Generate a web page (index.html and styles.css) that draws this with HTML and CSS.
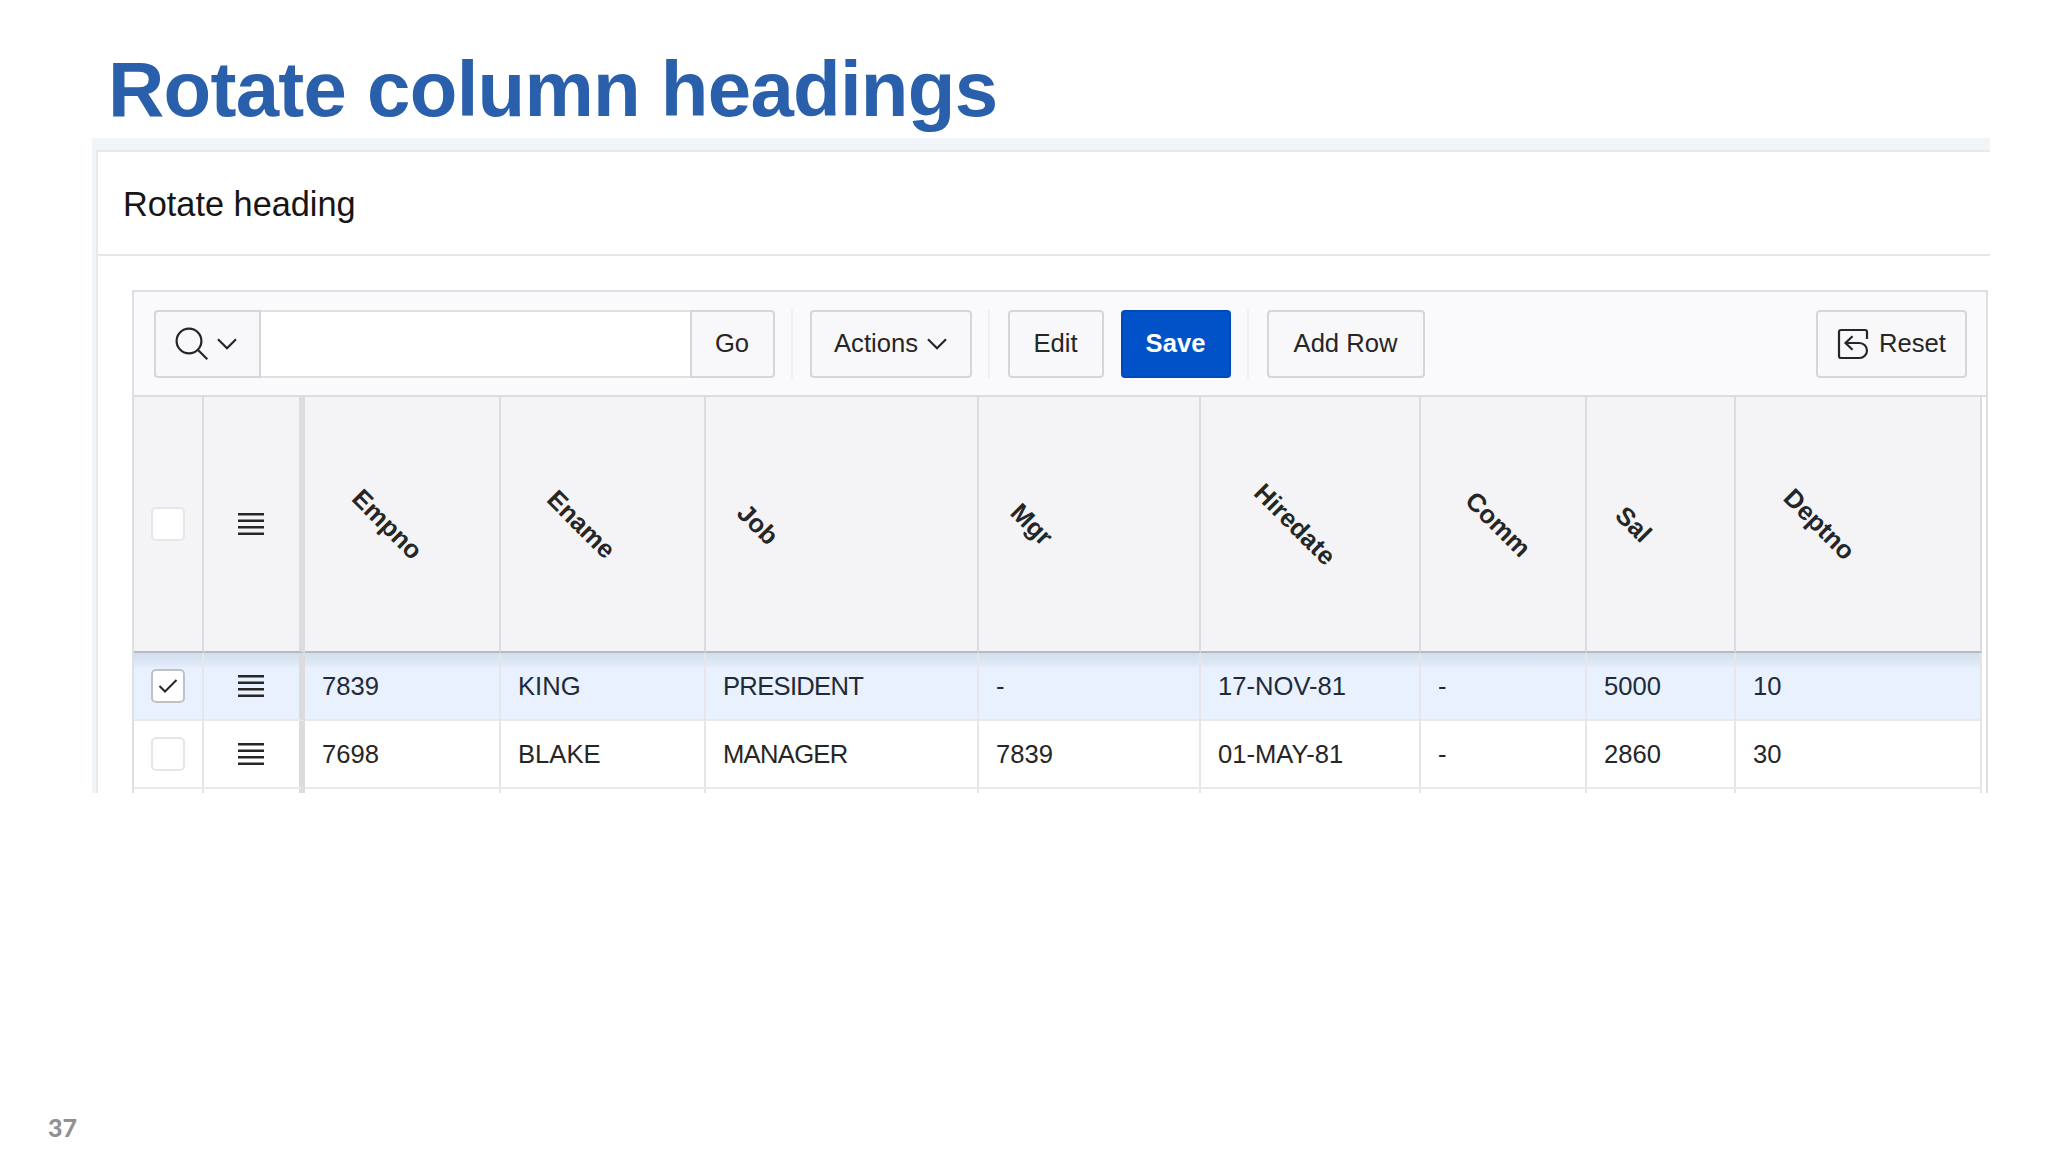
FILE: index.html
```html
<!DOCTYPE html>
<html lang="en">
<head>
    <meta charset="UTF-8">
    <meta name="viewport" content="width=device-width, initial-scale=1.0">
    <title>Rotate column headings</title>
    <link rel="stylesheet" href="styles.css">
</head>
<body>
    <h1>Rotate column headings</h1>

    <div class="page">
        <div class="region">
            <h2 class="region-title">Rotate heading</h2>

            <div class="grid">
                <div class="toolbar">
                    <div class="search">
                        <button class="btn search-btn">
                            <svg class="icon-search" width="34" height="34" viewBox="0 0 34 34"><circle cx="14" cy="14" r="12.4"/><path d="M22.8 22.8L32.3 32.3"/></svg>
                            <svg class="icon-down" width="20" height="12" viewBox="0 0 20 12"><path d="M1 1.2L10 10.2L19 1.2"/></svg>
                        </button>
                        <input type="text" class="search-input" aria-label="Search">
                        <button class="btn go">Go</button>
                    </div>
                    <span class="sep"></span>
                    <button class="btn actions">Actions
                        <svg class="icon-down" width="20" height="12" viewBox="0 0 20 12"><path d="M1 1.2L10 10.2L19 1.2"/></svg>
                    </button>
                    <span class="sep"></span>
                    <button class="btn edit">Edit</button>
                    <button class="btn save">Save</button>
                    <span class="sep"></span>
                    <button class="btn add">Add Row</button>
                    <button class="btn reset">
                        <svg width="32" height="32" viewBox="0 0 32 32"><path d="M30 11V4Q30 2 28 2H4Q2 2 2 4V28Q2 30 4 30H22.5A7.5 7.5 0 0 0 22.5 15H9M15.5 8.3L8.5 15L15.5 21.7"/></svg>
                        Reset
                    </button>
                </div>

                <table>
                    <colgroup>
                        <col class="c-check"><col class="c-menu"><col class="c-empno"><col class="c-ename"><col class="c-job">
                        <col class="c-mgr"><col class="c-hire"><col class="c-comm"><col class="c-sal"><col class="c-dept">
                    </colgroup>
                    <thead>
                        <tr>
                            <th class="center"><span class="box"></span></th>
                            <th class="center frozen"><svg class="menu" width="26" height="24" viewBox="0 0 26 24"><path d="M0 2.2H26M0 8.7H26M0 15.2H26M0 21.7H26"/></svg></th>
                            <th><span class="rotate">Empno</span></th>
                            <th><span class="rotate">Ename</span></th>
                            <th><span class="rotate">Job</span></th>
                            <th><span class="rotate">Mgr</span></th>
                            <th><span class="rotate">Hiredate</span></th>
                            <th><span class="rotate">Comm</span></th>
                            <th><span class="rotate">Sal</span></th>
                            <th><span class="rotate">Deptno</span></th>
                        </tr>
                    </thead>
                    <tbody>
                        <tr class="selected">
                            <td class="center"><span class="box checked"><svg width="20" height="16" viewBox="0 0 20 16"><path d="M1.5 8L7 13.5L18.5 2"/></svg></span></td>
                            <td class="center frozen"><svg class="menu" width="26" height="24" viewBox="0 0 26 24"><path d="M0 2.2H26M0 8.7H26M0 15.2H26M0 21.7H26"/></svg></td>
                            <td>7839</td>
                            <td>KING</td>
                            <td class="job">PRESIDENT</td>
                            <td>-</td>
                            <td>17-NOV-81</td>
                            <td>-</td>
                            <td>5000</td>
                            <td>10</td>
                        </tr>
                        <tr>
                            <td class="center"><span class="box"></span></td>
                            <td class="center frozen"><svg class="menu" width="26" height="24" viewBox="0 0 26 24"><path d="M0 2.2H26M0 8.7H26M0 15.2H26M0 21.7H26"/></svg></td>
                            <td>7698</td>
                            <td>BLAKE</td>
                            <td class="job">MANAGER</td>
                            <td>7839</td>
                            <td>01-MAY-81</td>
                            <td>-</td>
                            <td>2860</td>
                            <td>30</td>
                        </tr>
                        <!-- next row is cut off -->
                        <tr class="cut">
                            <td></td><td class="frozen"></td><td></td><td></td><td></td><td></td><td></td><td></td><td></td><td></td>
                        </tr>
                    </tbody>
                </table>
            </div>
        </div>
    </div>

    <div class="page-number">37</div>
</body>
</html>
```
FILE: styles.css
```css
* {
    box-sizing: border-box;
}
body {
    margin: 0;
    height: 1152px;
    background: #fff;
    color: #262626;
    font-family: "Liberation Sans", Arial, sans-serif;
    display: flex;
    flex-direction: column;
    overflow: hidden;
}
h1 {
    margin: 0;
    height: 138px;
    padding: 44px 0 0 108px;
    font-size: 78px;
    line-height: 90px;
    letter-spacing: -0.75px;
    color: #2a60ab;
    white-space: nowrap;
}
.page {
    width: 1898px;
    height: 655px;
    margin-left: 92px;
    padding: 12px 0 0 4px;
    background: #f1f4f8;
    overflow: hidden;
}
.region {
    height: 644px;
    background: #fff;
    border-top: 2px solid #e6e8eb;
    border-left: 2px solid #e6e8eb;
}
.region-title {
    margin: 0;
    height: 104px;
    padding-left: 25px;
    border-bottom: 2px solid #e6e6e9;
    font-size: 34.3px;
    font-weight: normal;
    line-height: 105px;
    color: #161616;
}
.grid {
    width: 1856px;
    height: 540px;
    margin: 34px 0 0 34px;
    border: 2px solid #dfdfe2;
    border-bottom: none;
}

/* Toolbar */
.toolbar {
    display: flex;
    align-items: center;
    height: 105px;
    padding: 0 19px 0 20px;
    background: #fafafc;
    border-bottom: 2px solid #dcdcdf;
}
.btn {
    display: flex;
    align-items: center;
    justify-content: center;
    height: 68px;
    padding: 0 1px 0 0;
    background: #f8f8fa;
    border: 2px solid #d6d6d8;
    border-radius: 4px;
    font-family: inherit;
    font-size: 25.6px;
    color: #262626;
    white-space: nowrap;
}
svg {
    fill: none;
    stroke: #262626;
    stroke-width: 2.2;
    flex: none;
}
.search {
    display: flex;
    width: 621px;
}
.search-btn {
    width: 107px;
    gap: 8px;
    padding-right: 4px;
    border-radius: 4px 0 0 4px;
}
.search-input {
    flex: 1;
    min-width: 0;
    height: 68px;
    background: #fff;
    border: solid #e0e0e2;
    border-width: 2px 0;
    outline: none;
}
.go {
    width: 85px;
    border-radius: 0 4px 4px 0;
}
.sep {
    width: 2px;
    height: 68px;
    margin: 0 17px 0 16px;
    background: #f0f0f2;
}
.actions { width: 162px; gap: 9px; }
.edit { width: 96px; margin-left: 1px; }
.save {
    width: 110px;
    margin-left: 17px;
    background: #0152c9;
    border-color: #014bb8;
    color: #fff;
    font-weight: bold;
}
.add { width: 158px; margin-left: 1px; }
.reset {
    width: 151px;
    margin-left: auto;
    padding: 0;
    gap: 10px;
}

/* Table */
table {
    width: 1848px;
    table-layout: fixed;
    border-collapse: separate;
    border-spacing: 0;
    font-size: 25.6px;
}
.c-check { width: 70px; }
.c-menu { width: 101px; }
.c-empno { width: 196px; }
.c-ename { width: 205px; }
.c-job { width: 273px; }
.c-mgr { width: 222px; }
.c-hire { width: 220px; }
.c-comm { width: 166px; }
.c-sal { width: 149px; }
.c-dept { width: 246px; }
th {
    height: 256px;
    padding: 0 0 0 18px;
    background: #f4f4f6;
    border-right: 2px solid #dcdcde;
    border-bottom: 2px solid #b7b9c0;
    font-size: 25.6px;
    text-align: left;
}
td {
    height: 68px;
    padding: 0 0 0 17px;
    border-right: 2px solid #e6e6e8;
    border-bottom: 2px solid #e9e9eb;
}
.center {
    padding: 0;
    text-align: center;
}
.frozen {
    padding-right: 2px;
    border-right: 6px solid #dcdcde;
}
.rotate {
    display: inline-block;
    transform: translateX(24%) rotate(45deg);
}
.job {
    letter-spacing: -0.7px;
}
.selected td {
    background: linear-gradient(#d3deee, #dde7f6 10px, #e9f1fe 16px);
    background-clip: padding-box;
    color: #212a38;
}
.cut td {
    height: 5px;
    border-bottom: none;
}
.menu, .box {
    display: inline-block;
    vertical-align: middle;
}
.menu {
    margin-bottom: 3px;
    stroke-width: 2.4;
}
.box {
    width: 34px;
    height: 34px;
    background: #fff;
    border: 2px solid #e6e6e8;
    border-radius: 5px;
}
.box.checked {
    display: inline-flex;
    align-items: center;
    justify-content: center;
    border-color: #bfc1c6;
}
.box svg {
    stroke-width: 2;
}
.page-number {
    margin: auto 0 10px 48px;
    font-family: Lato, sans-serif;
    font-size: 25px;
    font-weight: 900;
    line-height: 30px;
    color: #919191;
}
```
